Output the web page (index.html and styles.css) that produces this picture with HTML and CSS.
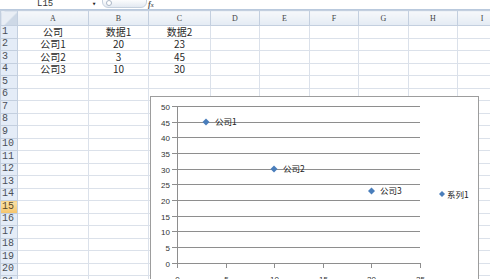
FILE: index.html
```html
<!DOCTYPE html>
<html lang="zh-CN">
<head>
  <meta charset="UTF-8" />
  <title>散点图</title>
  <link rel="stylesheet" href="styles.css">
</head>
<body>
  <div class="formula-bar">
    <div class="name-box">L15</div>
    <span class="dropdown">&#9662;</span>
    <div class="zoom-pill"><span class="knob"></span></div>
    <span class="fx">f<small>x</small></span>
  </div>

  <div class="sheet">
    <table class="grid">
      <colgroup>
        <col class="c-head"><col class="c-a"><col class="c-b"><col class="c-c">
        <col class="c-d"><col class="c-e"><col class="c-f"><col class="c-g"><col class="c-h"><col class="c-i">
      </colgroup>
      <thead>
        <tr><th class="corner"></th><th>A</th><th>B</th><th>C</th><th>D</th><th>E</th><th>F</th><th>G</th><th>H</th><th>I</th></tr>
      </thead>
      <tbody>
        <tr><th>1</th><td>公司</td><td>数据1</td><td>数据2</td><td></td><td></td><td></td><td></td><td></td><td></td></tr>
        <tr><th>2</th><td>公司1</td><td>20</td><td>23</td><td></td><td></td><td></td><td></td><td></td><td></td></tr>
        <tr><th>3</th><td>公司2</td><td>3</td><td>45</td><td></td><td></td><td></td><td></td><td></td><td></td></tr>
        <tr><th>4</th><td>公司3</td><td>10</td><td>30</td><td></td><td></td><td></td><td></td><td></td><td></td></tr>
        <tr><th>5</th><td></td><td></td><td></td><td></td><td></td><td></td><td></td><td></td><td></td></tr>
        <tr><th>6</th><td></td><td></td><td></td><td></td><td></td><td></td><td></td><td></td><td></td></tr>
        <tr><th>7</th><td></td><td></td><td></td><td></td><td></td><td></td><td></td><td></td><td></td></tr>
        <tr><th>8</th><td></td><td></td><td></td><td></td><td></td><td></td><td></td><td></td><td></td></tr>
        <tr><th>9</th><td></td><td></td><td></td><td></td><td></td><td></td><td></td><td></td><td></td></tr>
        <tr><th>10</th><td></td><td></td><td></td><td></td><td></td><td></td><td></td><td></td><td></td></tr>
        <tr><th>11</th><td></td><td></td><td></td><td></td><td></td><td></td><td></td><td></td><td></td></tr>
        <tr><th>12</th><td></td><td></td><td></td><td></td><td></td><td></td><td></td><td></td><td></td></tr>
        <tr><th>13</th><td></td><td></td><td></td><td></td><td></td><td></td><td></td><td></td><td></td></tr>
        <tr><th>14</th><td></td><td></td><td></td><td></td><td></td><td></td><td></td><td></td><td></td></tr>
        <tr class="active"><th>15</th><td></td><td></td><td></td><td></td><td></td><td></td><td></td><td></td><td></td></tr>
        <tr><th>16</th><td></td><td></td><td></td><td></td><td></td><td></td><td></td><td></td><td></td></tr>
        <tr><th>17</th><td></td><td></td><td></td><td></td><td></td><td></td><td></td><td></td><td></td></tr>
        <tr><th>18</th><td></td><td></td><td></td><td></td><td></td><td></td><td></td><td></td><td></td></tr>
        <tr><th>19</th><td></td><td></td><td></td><td></td><td></td><td></td><td></td><td></td><td></td></tr>
        <tr><th>20</th><td></td><td></td><td></td><td></td><td></td><td></td><td></td><td></td><td></td></tr>
        <tr><th>21</th><td></td><td></td><td></td><td></td><td></td><td></td><td></td><td></td><td></td></tr>
      </tbody>
    </table>

    <!-- chart floats over the cells -->
    <div class="chart">
      <svg width="329" height="190" viewBox="0 0 329 190">
        <g class="gridlines">
          <line x1="27" y1="10.5" x2="270" y2="10.5" />
          <line x1="27" y1="26.5" x2="270" y2="26.5" />
          <line x1="27" y1="41.5" x2="270" y2="41.5" />
          <line x1="27" y1="57.5" x2="270" y2="57.5" />
          <line x1="27" y1="73.5" x2="270" y2="73.5" />
          <line x1="27" y1="88.5" x2="270" y2="88.5" />
          <line x1="27" y1="104.5" x2="270" y2="104.5" />
          <line x1="27" y1="120.5" x2="270" y2="120.5" />
          <line x1="27" y1="135.5" x2="270" y2="135.5" />
          <line x1="27" y1="151.5" x2="270" y2="151.5" />
        </g>
        <g class="axis">
          <line x1="27.5" y1="10" x2="27.5" y2="168" />
          <line x1="27" y1="167.5" x2="271" y2="167.5" />
          <path d="M22 10.5H27M22 26.5H27M22 41.5H27M22 57.5H27M22 73.5H27M22 88.5H27M22 104.5H27M22 120.5H27M22 135.5H27M22 151.5H27M22 167.5H27" />
          <path d="M27.5 167V172M76.5 167V172M124.5 167V172M173.5 167V172M221.5 167V172M270.5 167V172" />
        </g>
        <g class="y-labels">
          <text x="20" y="13.5">50</text>
          <text x="20" y="29.5">45</text>
          <text x="20" y="44.5">40</text>
          <text x="20" y="60.5">35</text>
          <text x="20" y="76.5">30</text>
          <text x="20" y="91.5">25</text>
          <text x="20" y="107.5">20</text>
          <text x="20" y="123.5">15</text>
          <text x="20" y="138.5">10</text>
          <text x="20" y="154.5">5</text>
          <text x="20" y="170.5">0</text>
        </g>
        <g class="x-labels">
          <text x="27.5" y="186">0</text>
          <text x="76.5" y="186">5</text>
          <text x="124.5" y="186">10</text>
          <text x="173.5" y="186">15</text>
          <text x="221.5" y="186">20</text>
          <text x="270.5" y="186">25</text>
        </g>
        <g class="points">
          <path d="M56 22.5L59.5 26L56 29.5L52.5 26Z" />
          <path d="M124 69.5L127.5 73L124 76.5L120.5 73Z" />
          <path d="M221.5 91.5L225 95L221.5 98.5L218 95Z" />
        </g>
        <g class="point-labels">
          <text x="65" y="29">公司1</text>
          <text x="133" y="76">公司2</text>
          <text x="230" y="98">公司3</text>
        </g>
        <g class="legend">
          <path d="M292 95L295 98L292 101L289 98Z" />
          <text x="297" y="101.5">系列1</text>
        </g>
      </svg>
    </div>
  </div>
</body>
</html>
```

FILE: styles.css
```css
* {
  margin: 0;
  padding: 0;
  box-sizing: border-box;
}
body {
  width: 490px;
  height: 279px;
  overflow: hidden;
  background: #fff;
  font-family: "Noto Sans CJK SC", sans-serif;
  color: #222;
}
.formula-bar {
  height: 10px;
  display: flex;
  align-items: center;
  background: #fff;
  border-bottom: 1px solid #b9c9dd;
  font-family: "Liberation Mono", monospace;
  font-size: 9px;
  color: #333;
}
.name-box {
  width: 92px;
  padding-left: 37px;
  line-height: 9px;
}
.dropdown {
  width: 10px;
  font-size: 7px;
  color: #222;
  line-height: 9px;
}
.zoom-pill {
  width: 45px;
  height: 9px;
  margin-top: -2px;
  border: 1px solid #c6d1de;
  border-radius: 0 0 6px 6px;
  background: linear-gradient(#fbfcfd, #e3e9f1);
  position: relative;
}
.zoom-pill .knob {
  position: absolute;
  left: 3px;
  top: 0;
  width: 6px;
  height: 6px;
  border: 1px solid #aab6c6;
  border-radius: 50%;
  background: #fff;
}
.fx {
  margin-left: 1px;
  font-family: "Liberation Serif", serif;
  font-style: italic;
  font-weight: bold;
  font-size: 8px;
  color: #555;
}
.fx small {
  font-size: 6px;
}
.sheet {
  position: relative;
}
.grid {
  border-collapse: collapse;
  table-layout: fixed;
  width: 506px;
}
.c-head { width: 17px; }
.c-a { width: 71px; }
.c-b { width: 60px; }
.c-c { width: 62px; }
.c-d { width: 49px; }
.c-e { width: 50px; }
.c-f { width: 49px; }
.c-g { width: 50px; }
.c-h { width: 49px; }
.c-i { width: 49px; }
.grid thead tr {
  height: 15px;
}
.grid thead th {
  border: 1px solid #c3cfdf;
  background: linear-gradient(#f6f8fb, #e4ebf4);
  font-family: "Liberation Serif", serif;
  font-weight: normal;
  font-size: 8px;
  line-height: 9px;
  color: #444;
  text-align: center;
}
.grid thead th.corner {
  background: linear-gradient(135deg, #e9eef5 55%, #cdd8e6 56%);
}
.grid tbody tr {
  height: 12.5px;
}
.grid tbody th {
  border: 1px solid #c3cfdf;
  background: #e4ecf7;
  font-family: "Liberation Mono", monospace;
  font-weight: normal;
  font-size: 10px;
  line-height: 10px;
  color: #4a4f58;
  text-align: left;
  padding-left: 1px;
}
.grid tbody tr.active th {
  background: linear-gradient(#fbe3a8, #f5c36a);
  color: #5a4a2a;
}
.grid td {
  border: 1px solid #dbe1ea;
  font-size: 10px;
  line-height: 10px;
  text-align: center;
  color: #2a2a2a;
  white-space: nowrap;
}
.chart {
  position: absolute;
  left: 150px;
  top: 86px;
  width: 329px;
  height: 200px;
  background: #fff;
  border: 1px solid #9d9d9d;
}
.chart svg {
  display: block;
  margin: -1px 0 0 -1px;
}
.gridlines line {
  stroke: #8e8e8e;
  stroke-width: 1;
}
.axis line,
.axis path {
  stroke: #8e8e8e;
  stroke-width: 1;
  fill: none;
}
.y-labels text {
  font-family: "Liberation Sans", sans-serif;
  font-size: 8px;
  fill: #333;
  text-anchor: end;
}
.x-labels text {
  font-family: "Liberation Sans", sans-serif;
  font-size: 8px;
  fill: #333;
  text-anchor: middle;
}
.points path,
.legend path {
  fill: #4a7ebb;
}
.point-labels text,
.legend text {
  font-family: "Noto Sans CJK SC", sans-serif;
  font-size: 8.5px;
  fill: #222;
}
```
